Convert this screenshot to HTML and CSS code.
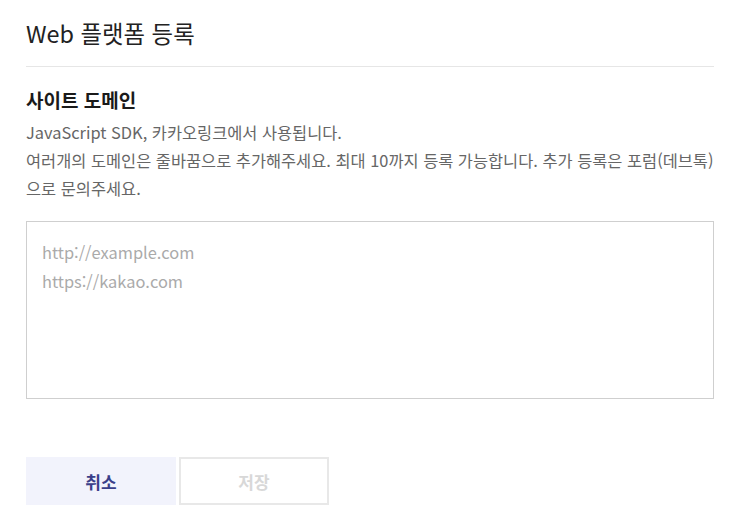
FILE: index.html
```html
<!DOCTYPE html>
<html lang="ko">
<head>
<meta charset="utf-8">
<link rel="stylesheet" href="styles.css">
</head>
<body>
<div class="page">
  <header class="header">
    <h1 class="title">Web 플랫폼 등록</h1>
  </header>
  <section class="section">
    <h2 class="label">사이트 도메인</h2>
    <p class="desc">JavaScript SDK, 카카오링크에서 사용됩니다.<br>여러개의 도메인은 줄바꿈으로 추가해주세요. 최대 10까지 등록 가능합니다. 추가 등록은 포럼(데브톡)<br>으로 문의주세요.</p>
    <textarea class="domains" placeholder="http://example.com&#10;https://kakao.com"></textarea>
  </section>
  <div class="actions">
    <button class="btn btn-cancel" type="button">취소</button>
    <button class="btn btn-save" type="button" disabled>저장</button>
  </div>
</div>
</body>
</html>
```
FILE: styles.css
```css
* { box-sizing: border-box; }
html, body { margin: 0; padding: 0; background: #fff; }
body {
  font-family: "Noto Sans CJK KR", "Noto Sans", sans-serif;
  color: #222;
}
.page {
  padding: 0 18px 0 26px;
}
.header {
  height: 67px;
  display: flex;
  align-items: center;
  border-bottom: 1px solid #e6e6e6;
}
.title {
  margin: 0;
  font-size: 23.4px;
  font-weight: 400;
  line-height: 30px;
  color: #222;
}
.section {
  padding-top: 21px;
}
.label {
  margin: 0;
  font-size: 19px;
  font-weight: 700;
  line-height: 24px;
  color: #1a1a1a;
}
.desc {
  margin: 6px 0 0;
  font-size: 16.4px;
  line-height: 28px;
  color: #666;
  white-space: nowrap;
}
.domains {
  display: block;
  margin-top: 19px;
  width: 688px;
  height: 178px;
  border: 1px solid #cfcfcf;
  border-radius: 0;
  padding: 16px 15px;
  font-family: inherit;
  font-size: 16.4px;
  line-height: 29px;
  color: #333;
  resize: none;
  outline: none;
}
.domains::placeholder {
  color: #aaa;
}
.actions {
  display: flex;
  gap: 3px;
  margin-top: 58px;
}
.btn {
  width: 150px;
  height: 48px;
  border: 1px solid transparent;
  border-radius: 0;
  font-family: inherit;
  font-size: 17px;
  font-weight: 700;
  padding: 0;
}
.btn-cancel {
  background: #f2f3fc;
  color: #3a3f8a;
}
.btn-save {
  background: #fff;
  border: 2px solid #e8e8e8;
  color: #d8d8d8;
}
```
